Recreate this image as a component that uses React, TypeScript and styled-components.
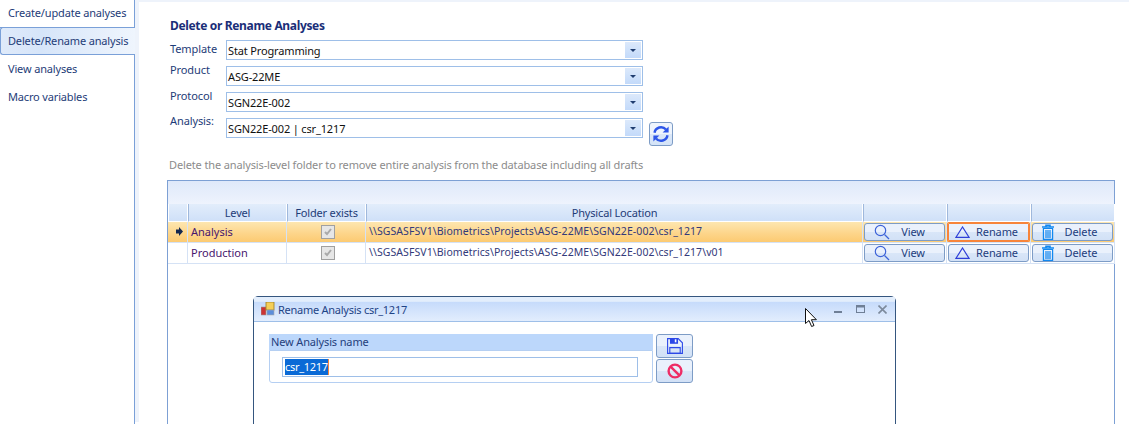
import React from "react";
import styled, { createGlobalStyle } from "styled-components";

const Global = createGlobalStyle`
  html, body { margin: 0; padding: 0; background: #fff; overflow: hidden; }
  body { font-family: "Noto Sans", "Open Sans", sans-serif; font-size: 11px; color: #15428b; }
`;

const Page = styled.div`
  width: 1133px; height: 424px; display: flex; overflow: hidden; position: relative; background: #fff;
`;
const Sidebar = styled.nav`
  width: 134px; height: 424px; border-right: 1px solid #7aa0d8; display: flex; flex-direction: column; flex: none; box-sizing: content-box;
`;
const NavItem = styled.div<{ $active?: boolean }>`
  height: 28px; line-height: 28px; padding-left: 8px; color: #1e3c78; letter-spacing: -.16px; white-space: nowrap;
  box-sizing: border-box; flex: none; margin-right: ${p => (p.$active ? "-1px" : "0")};
  ${p => p.$active ? `
    line-height: 26px; margin-top: -1px; position: relative; z-index: 1;
    border: 1px solid #7aa0d8; border-right: none; border-radius: 3px 0 0 3px; padding-left: 7px;
    background: linear-gradient(90deg, #dfeafa 0%, #d6e5f9 30%, #eff5fd 100%);
  ` : ""}
  &:first-child { border-bottom: 1px solid #7aa0d8; line-height: 26px; }
`;
const Main = styled.main`
  flex: 1; margin-left: 4px; margin-top: 2px; position: relative; box-shadow: -4px -2px 0 #eef3fb; padding: 0 0 0 28px; min-width: 0;
`;
const Title = styled.h1`
  margin: 16px 0 6px 3px; font-size: 12px; line-height: 16px; font-weight: 700; color: #1a2e78; letter-spacing: -.34px;
`;
const FormRow = styled.div<{ $top?: number }>`
  display: flex; align-items: flex-start; margin-top: ${p => p.$top ?? 6}px; margin-left: 3px; height: 20px;
`;
const FieldLabel = styled.label<{ $up?: number }>`
  width: 56px; flex: none; color: #1e3c78; line-height: 14px; letter-spacing: -.1px; margin-top: ${p => 2 - (p.$up ?? 0)}px;
`;
const Combo = styled.div`
  width: 417px; height: 20px; box-sizing: border-box; border: 1px solid #9ebfe8; display: flex; align-items: center; justify-content: space-between; background: #fff;
  padding: 1px; color: #111; 
`;
const ComboText = styled.span`
  padding-left: 0; letter-spacing: -.15px;
`;
const ComboArrow = styled.span`
  width: 16px; height: 16px; background: linear-gradient(#dce9fb, #c3dafa); display: flex; align-items: center; justify-content: center;
`;
const Caret = styled.i`
  width: 0; height: 0; border-left: 3px solid transparent; border-right: 3px solid transparent; border-top: 3px solid #1f3d70; display: block;
`;
const RefreshButton = styled.button`
  width: 24px; height: 24px; margin: 4px 0 0 6px; padding: 0; border: 1px solid #7d9cc6; border-radius: 3px; flex: none;
  background: linear-gradient(#eef4fd 0 50%, #dce8f8 50%, #d4e3f7); display: flex; align-items: center; justify-content: center;
`;
const Hint = styled.p`
  margin: 20px 0 0 2px; line-height: 14px; color: #8c8c8c; letter-spacing: -.13px;
`;
const GridPanel = styled.section`
  margin: 8px 0 0 0; width: 948px; height: 246px; box-sizing: border-box; border: 1px solid #7da0d4; border-bottom: none;
`;
const GridStrip = styled.div`
  height: 23px; background: linear-gradient(#dfe9fa, #eef3fd);
`;
const COLS = "20px 99px 79px 497px 84px 84px 84px";
const GridRow = styled.div<{ $h: number; $sel?: boolean }>`
  display: grid; grid-template-columns: ${COLS}; height: ${p => p.$h}px;
  background: ${p => p.$sel ? "linear-gradient(#fde6b0, #fdd58a 55%, #fcc96f)" : "#fff"};
`;
const HeadCell = styled.div`
  background: linear-gradient(#e2edfb, #cfe0f8); border-right: 1px solid #fff; border-left: 1px solid #9fb8dc; border-bottom: 1px solid #fff; box-sizing: border-box;
  text-align: center; line-height: 17px; color: #1e3c78; letter-spacing: -.17px; &:first-child { border-left: 1px solid #fff; }
`;
const Cell = styled.div<{ $center?: boolean }>`
  box-sizing: border-box; border-right: 1px solid #d5e2f5; border-bottom: 1px solid #d5e2f5; line-height: 19px; padding: 0 0 1px 3px; color: #47156e; white-space: nowrap; letter-spacing: 0;
  display: flex; align-items: center; justify-content: ${p => p.$center ? "center" : "flex-start"};
`;
const PathCell = styled(Cell)` color: #333a7a; letter-spacing: .07px; padding-left: 3px; font-size: 10.5px; `;
const CheckBox = styled.span`
  width: 12px; height: 12px; border: 1px solid #a0a0a0; background: #e6e6e6; display: flex; align-items: center; justify-content: center;
`;
const ActionCell = styled.div<{ $sel?: boolean }>`
  box-sizing: border-box; padding: 1px 1px 1px 1px; display: flex; border-bottom: 1px solid #d5e2f5; border-right: 1px solid #d5e2f5;
`;
const ActionButton = styled.button<{ $focus?: boolean }>`
  flex: 1; height: 18px; margin: 0; padding: 0 0 1px 9px; font: inherit; color: #233d7e; letter-spacing: -.1px; display: flex; align-items: center; border-radius: 3px;
  border: 1px solid #7d9cc6; background: linear-gradient(#eaf1fc 0 50%, #d9e6f8 50%, #d2e1f6);
  ${p => p.$focus ? "outline: 1px solid #f7843a; outline-offset: 0; border-radius: 1px; border-color: #f7843a;" : ""}
`;
const ActionIcon = styled.span<{ $dx: number }>`
  width: 18px; height: 18px; display: flex; align-items: center; justify-content: center; flex: none;
  margin: 1px ${p => -p.$dx}px 0 ${p => p.$dx}px;
`;
const ActionLabel = styled.span`
  flex: 1; text-align: center; padding-right: 10px;
`;
const Dialog = styled.div`
  position: absolute; left: 253px; top: 296px; width: 643px; height: 140px; box-sizing: border-box; background: #fff; border: 1px solid #35567f; border-radius: 5px 5px 0 0;
`;
const TitleBar = styled.div`
  height: 24px; display: flex; align-items: center; padding: 0 0 0 7px; border-bottom: 1px solid #9ebfe8; background: linear-gradient(#e3eefc 0 18%, #c6dbfb 22%, #e2edfd 100%);
`;
const TitleText = styled.span`
  margin-left: 3px; color: #1f4486; flex: 1; letter-spacing: -.26px;
`;
const WinControls = styled.div`
  display: flex; align-items: center; gap: 13px; margin-right: 8px;
`;
const DialogBody = styled.div`
  display: flex; padding: 12px 0 0 15px; gap: 3px;
`;
const GroupBox = styled.div` width: 384px; `;
const GroupHead = styled.div`
  height: 16px; line-height: 16px; background: #bcd7fb; color: #24407c; padding-left: 2px; letter-spacing: -.14px;
`;
const GroupBody = styled.div`
  height: 33px; box-sizing: border-box; border: 1px solid #b5cff2; border-radius: 0 0 3px 3px; padding: 6px 0 0 12px;
`;
const NameInput = styled.div`
  width: 356px; height: 20px; box-sizing: border-box; border: 1px solid #9ebfe8; padding: 1px 0 0 2px; line-height: 16px; color: #fff;
`;
const Selected = styled.span`
  display: inline-block; background: #0a6ad6; height: 16px; padding: 0; border-right: 1px solid #f7843a; letter-spacing: -.3px;
`;
const SideButtons = styled.div`
  display: flex; flex-direction: column; gap: 1px;
`;
const SideButton = styled.button<{ $h: number }>`
  width: 37px; height: ${p => p.$h}px; padding: 0; border: 1px solid #7d9cc6; border-radius: 3px; display: flex; align-items: center; justify-content: center;
  background: linear-gradient(#eaf1fc 0 50%, #d9e6f8 50%, #d2e1f6);
`;
const Cursor = styled.svg`
  position: absolute; left: 805px; top: 308px;
`;

const Search = () => (
  <svg width="16" height="16" viewBox="0 0 16 16" fill="none" stroke="#3d63d8" strokeWidth="1.2"><circle cx="6.5" cy="6.5" r="5.2" /><path d="M10.5 10.5l4.5 4.5" /></svg>
);
const Triangle = () => (
  <svg width="15" height="12" viewBox="0 0 15 12" fill="none" stroke="#2f3fd8" strokeWidth="1.2"><path d="M7.5 1L1 11.3h13z" /></svg>
);
const Trash = () => (
  <svg width="14" height="16" viewBox="0 0 14 16" fill="none" stroke="#1188f0" strokeWidth="1.2"><path d="M1 3h12M5 3V1.2h4V3" strokeWidth="1.6" /><path d="M2.4 4.5h9.2v10.8H2.4zM5 6v8M7 6v8M9 6v8" /></svg>
);
const Refresh = () => (
  <svg width="18" height="18" viewBox="0 0 18 18" fill="none"><path d="M2.5 7.8A6.6 6.6 0 0 1 14 4.5" stroke="#2d55e8" strokeWidth="2.4" /><path d="M16.6 1.5v6h-6z" fill="#2d55e8" /><path d="M15.5 10.2A6.6 6.6 0 0 1 4 13.5" stroke="#2d55e8" strokeWidth="2.4" /><path d="M1.4 16.5v-6h6z" fill="#2d55e8" /></svg>
);
const Check = () => (
  <svg width="10" height="10" viewBox="0 0 10 10" fill="none" stroke="#a9a9a9" strokeWidth="2"><path d="M2 5l2 2 4-5" /></svg>
);
const RowArrow = () => (
  <svg width="7" height="9" viewBox="0 0 7 9"><path d="M3 0l4 4.5-4 4.5V6.5H0v-4h3z" fill="#14284f" /></svg>
);
const AppIcon = () => (
  <svg width="14" height="14" viewBox="0 0 14 14"><rect x="0" y="5" width="5" height="8" fill="#c33" stroke="#999" strokeWidth=".6"/><rect x="5" y="0" width="8" height="8" fill="#f5cf58" stroke="#9a7a1f" strokeWidth=".8"/><rect x="6" y="8" width="7" height="5" fill="#5c8edb" stroke="#aaa" strokeWidth=".6"/></svg>
);
const Save = () => (
  <svg width="16" height="16" viewBox="0 0 16 16" fill="none" stroke="#2c48e8" strokeWidth="1.1"><path d="M.6.6h10.6l4.2 4.2v10.6H.6z" /><path d="M3.5.6h7v4.6h-7z" fill="#2c48e8" /><path d="M2.8 9.6h10.4v5.8H2.8z" /><rect x="7.8" y="1.3" width="1.6" height="3" fill="#fff" stroke="none"/></svg>
);
const Ban = () => (
  <svg width="16" height="16" viewBox="0 0 16 16" fill="none" stroke="#ee2d66" strokeWidth="2.4"><circle cx="8" cy="8" r="6.4" /><path d="M3.6 3.6l8.8 8.8" /></svg>
);
const Min = () => <svg width="9" height="9" viewBox="0 0 9 9"><rect x="0" y="6" width="8" height="2" fill="#6f7f96" /></svg>;
const Max = () => <svg width="9" height="8" viewBox="0 0 9 8" fill="none"><rect x=".5" y=".5" width="8" height="7" stroke="#6f7f96" /><rect x="0" y="0" width="9" height="2.5" fill="#6f7f96" /></svg>;
const Close = () => <svg width="9" height="9" viewBox="0 0 9 9" stroke="#7d8a9c" strokeWidth="1.6"><path d="M.5.5l8 8M8.5.5l-8 8" /></svg>;

const fields = [
  { label: "Template", value: "Stat Programming", up: 0 },
  { label: "Product", value: "ASG-22ME", up: 5 },
  { label: "Protocol", value: "SGN22E-002", up: 5 },
  { label: "Analysis:", value: "SGN22E-002 | csr_1217", up: 6 },
];
const rows = [
  { level: "Analysis", path: "\\\\SGSASFSV1\\Biometrics\\Projects\\ASG-22ME\\SGN22E-002\\csr_1217", sel: true, h: 21 },
  { level: "Production", path: "\\\\SGSASFSV1\\Biometrics\\Projects\\ASG-22ME\\SGN22E-002\\csr_1217\\v01", sel: false, h: 21 },
];

export default function App() {
  return (
    <Page>
      <Global />
      <Sidebar>
        <NavItem>Create/update analyses</NavItem>
        <NavItem $active>Delete/Rename analysis</NavItem>
        <NavItem>View analyses</NavItem>
        <NavItem>Macro variables</NavItem>
      </Sidebar>
      <Main>
        <Title>Delete or Rename Analyses</Title>
        {fields.map((f, i) => (
          <FormRow key={f.label} $top={i === 0 ? 0 : 6}>
            <FieldLabel $up={f.up}>{f.label}</FieldLabel>
            <Combo><ComboText>{f.value}</ComboText><ComboArrow><Caret /></ComboArrow></Combo>
            {i === 3 && <RefreshButton aria-label="Refresh"><Refresh /></RefreshButton>}
          </FormRow>
        ))}
        <Hint>Delete the analysis-level folder to remove entire analysis from the database including all drafts</Hint>
        <GridPanel>
          <GridStrip />
          <GridRow $h={18}>
            <HeadCell /><HeadCell>Level</HeadCell><HeadCell>Folder exists</HeadCell><HeadCell>Physical Location</HeadCell><HeadCell /><HeadCell /><HeadCell />
          </GridRow>
          {rows.map(r => (
            <GridRow key={r.level} $h={r.h} $sel={r.sel}>
              <Cell $center>{r.sel && <RowArrow />}</Cell>
              <Cell>{r.level}</Cell>
              <Cell $center><CheckBox><Check /></CheckBox></Cell>
              <PathCell>{r.path}</PathCell>
              <ActionCell><ActionButton><ActionIcon $dx={-1}><Search /></ActionIcon><ActionLabel>View</ActionLabel></ActionButton></ActionCell>
              <ActionCell><ActionButton $focus={r.sel}><ActionIcon $dx={-5}><Triangle /></ActionIcon><ActionLabel>Rename</ActionLabel></ActionButton></ActionCell>
              <ActionCell><ActionButton><ActionIcon $dx={-3}><Trash /></ActionIcon><ActionLabel>Delete</ActionLabel></ActionButton></ActionCell>
            </GridRow>
          ))}
        </GridPanel>
      </Main>
      <Dialog>
        <TitleBar>
          <AppIcon /><TitleText>Rename Analysis csr_1217</TitleText>
          <WinControls><Min /><Max /><Close /></WinControls>
        </TitleBar>
        <DialogBody>
          <GroupBox>
            <GroupHead>New Analysis name</GroupHead>
            <GroupBody><NameInput><Selected>csr_1217</Selected></NameInput></GroupBody>
          </GroupBox>
          <SideButtons>
            <SideButton $h={24} aria-label="Save"><Save /></SideButton>
            <SideButton $h={24} aria-label="Cancel"><Ban /></SideButton>
          </SideButtons>
        </DialogBody>
      </Dialog>
      <Cursor width="13" height="20" viewBox="0 0 13 20"><path d="M.5.5v15l3.5-3 2.6 6 2.4-1-2.6-5.8h5z" fill="#fff" stroke="#111" strokeWidth="1" /></Cursor>
    </Page>
  );
}
